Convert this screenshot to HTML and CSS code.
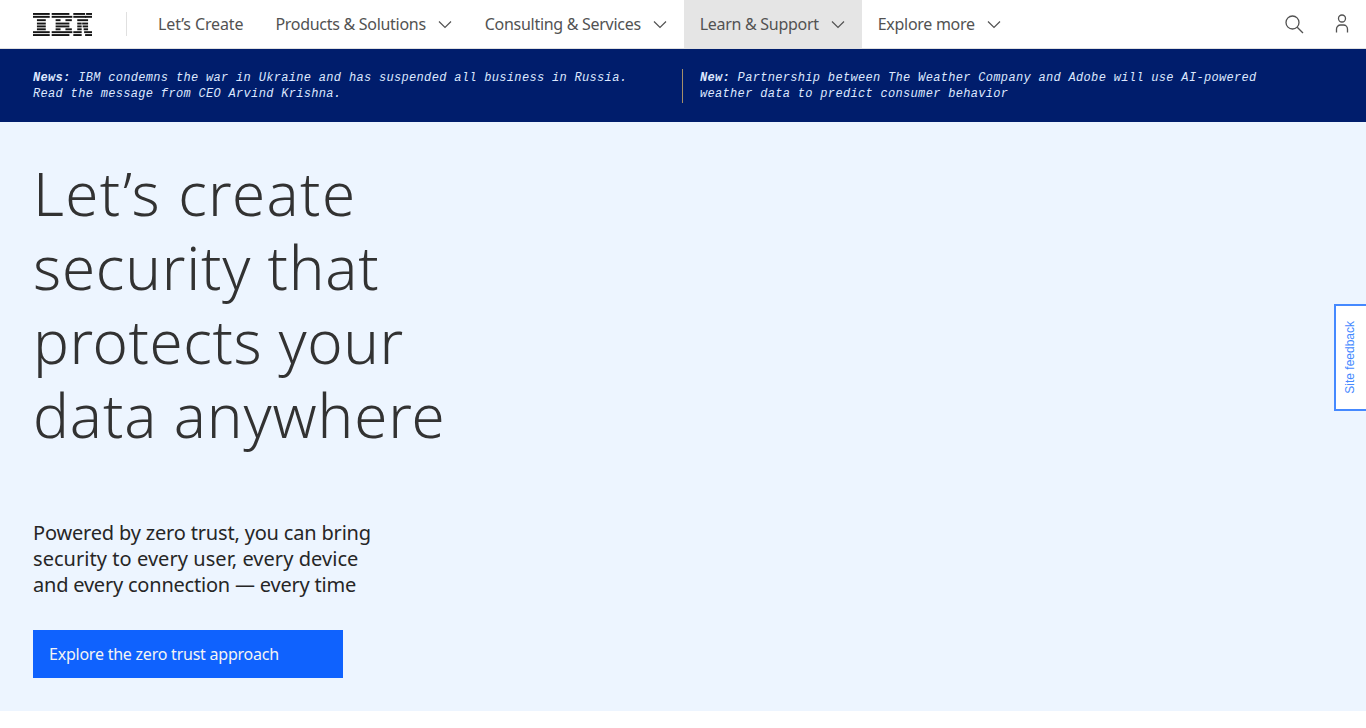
FILE: index.html
```html
<!DOCTYPE html>
<html lang="en">
<head>
<meta charset="utf-8">
<title>IBM</title>
<link rel="stylesheet" href="styles.css">
</head>
<body>
<header class="nav">
  <a class="logo" href="#" aria-label="IBM">
    <svg width="59" height="23" viewBox="0 0 60 24" preserveAspectRatio="none" fill="#161616">
      <rect x="0" y="0" width="17" height="2"/><rect x="19" y="0" width="18" height="2"/><rect x="41" y="0" width="12" height="2"/><rect x="54" y="0" width="6" height="2"/>
      <rect x="0" y="3" width="17" height="2"/><rect x="19" y="3" width="21" height="2"/><rect x="41" y="3" width="13" height="2"/><rect x="53" y="3" width="7" height="2"/>
      <rect x="4" y="6.5" width="9" height="2"/><rect x="23" y="6.5" width="5" height="2"/><rect x="33" y="6.5" width="6.5" height="2"/><rect x="45" y="6.5" width="11" height="2"/>
      <rect x="4" y="10" width="9" height="2"/><rect x="23" y="10" width="14" height="2"/><rect x="45" y="10" width="4.5" height="2"/><rect x="50" y="10" width="6" height="2"/>
      <rect x="4" y="13" width="9" height="2"/><rect x="23" y="13" width="14" height="2"/><rect x="45" y="13" width="4.5" height="2"/><rect x="50.5" y="13" width="5.5" height="2"/>
      <rect x="4" y="16" width="9" height="2"/><rect x="23" y="16" width="5" height="2"/><rect x="33" y="16" width="6.5" height="2"/><rect x="45" y="16" width="4.5" height="2"/><rect x="51.5" y="16" width="4.5" height="2"/>
      <rect x="0" y="19" width="17" height="2"/><rect x="19" y="19" width="21" height="2"/><rect x="41" y="19" width="8.5" height="2"/><rect x="52" y="19" width="8" height="2"/>
      <rect x="0" y="22" width="17" height="2"/><rect x="19" y="22" width="18" height="2"/><rect x="41" y="22" width="8.5" height="2"/><rect x="53" y="22" width="7" height="2"/>
    </svg>
  </a>
  <nav class="menu">
    <a class="item first" href="#">Let’s Create</a>
    <a class="item" href="#">Products &amp; Solutions<svg class="chev" width="16" height="16" viewBox="0 0 16 16"><path d="M2 5.5l6 6 6-6"/></svg></a>
    <a class="item" href="#">Consulting &amp; Services<svg class="chev" width="16" height="16" viewBox="0 0 16 16"><path d="M2 5.5l6 6 6-6"/></svg></a>
    <a class="item active" href="#">Learn &amp; Support<svg class="chev" width="16" height="16" viewBox="0 0 16 16"><path d="M2 5.5l6 6 6-6"/></svg></a>
    <a class="item" href="#">Explore more<svg class="chev" width="16" height="16" viewBox="0 0 16 16"><path d="M2 5.5l6 6 6-6"/></svg></a>
  </nav>
  <div class="tools">
    <svg class="tool" width="20" height="20" viewBox="0 0 20 20"><circle cx="8.5" cy="8.5" r="6.5"/><path d="M13.2 13.2L19 19"/></svg>
    <svg class="tool" width="20" height="20" viewBox="0 0 20 20"><circle cx="10" cy="4.5" r="3.5"/><path d="M4.5 18.5v-3.5a4 4 0 0 1 4-4h3a4 4 0 0 1 4 4v3.5"/></svg>
  </div>
</header>
<section class="banner">
  <p class="news"><b>News:</b> IBM condemns the war in Ukraine and has suspended all business in Russia.<br>Read the message from CEO Arvind Krishna.</p>
  <p class="news second"><b>New:</b> Partnership between The Weather Company and Adobe will use AI-powered<br>weather data to predict consumer behavior</p>
</section>
<main class="hero">
  <h1><span class="h1">Let’s create</span><span class="h2">security that</span><span class="h3">protects your</span><span class="h4">data anywhere</span></h1>
  <p class="lead"><span class="l1">Powered by zero trust, you can bring</span><span class="l2">security to every user, every device</span><span class="l3">and every connection — every time</span></p>
  <a class="cta" href="#">Explore the zero trust approach</a>
</main>
<a class="feedback" href="#"><span>Site feedback</span></a>
</body>
</html>
```
FILE: styles.css
```css
* { box-sizing: border-box; }
html, body { margin: 0; padding: 0; background: #fff; }
body { font-family: "Noto Sans", "Open Sans", sans-serif; color: #161616; height: 728px; overflow: hidden; }
a { text-decoration: none; color: inherit; }
.nav { display: flex; align-items: stretch; height: 49px; border-bottom: 1px solid #e0e0e0; padding-left: 33px; }
.logo { display: flex; align-items: center; width: 94px; position: relative; padding-top: 1px; }
.logo::after { content: ""; position: absolute; right: 0; top: 12px; height: 24px; width: 1px; background: #e0e0e0; }
.menu { display: flex; margin-left: 15px; }
.item { display: flex; align-items: center; gap: 11px; padding: 0 16px; font-size: 16px; letter-spacing: -0.29px; color: #525252; height: 48px; }
.item.first { letter-spacing: -0.12px; }
.item.active { background: #e5e5e5; }
.chev { fill: none; stroke: #525252; stroke-width: 1.2; }
.tools { margin-left: auto; display: flex; align-items: center; gap: 28px; padding-right: 14px; }
.tool { fill: none; stroke: #525252; stroke-width: 1.3; }
.banner { display: flex; align-items: center; height: 73px; background: #001d6c; color: #dde8ff; padding-left: 33px; }
.news { margin: 0; font: italic 12px/16px "Liberation Mono", monospace; letter-spacing: 0.32px; width: 649px; }
.news.second { border-left: 1px solid #a58f68; padding: 1px 0 0 17px; width: auto; height: 34px; }
.hero { background: #edf5ff; height: 589px; padding: 34px 33px 0; }
h1 { margin: 0; font-weight: 300; font-size: 60px; line-height: 74px; color: #323232; }
h1 span, .lead span { display: block; }
.h1 { letter-spacing: 1.42px; }
.h2 { letter-spacing: 0.8px; }
.h3 { letter-spacing: 0.6px; }
.h4 { letter-spacing: 0.9px; }
.lead { margin: 68px 0 0; font-size: 20px; line-height: 26px; color: #262626; }
.l1 { letter-spacing: -0.18px; }
.l2 { letter-spacing: 0.05px; }
.l3 { letter-spacing: -0.21px; }
.cta { display: flex; align-items: center; width: 310px; height: 48px; margin-top: 32px; padding-left: 16px; background: #0f62fe; color: #f4f4f4; font-size: 16px; letter-spacing: -0.23px; }
.feedback { position: absolute; right: 0; top: 304px; width: 32px; height: 107px; background: #fff; border: 2px solid #4589ff; border-right: 0; padding-right: 2px; display: flex; align-items: center; justify-content: center; }
.feedback span { writing-mode: vertical-rl; transform: rotate(180deg); font: 12px "Liberation Sans", sans-serif; color: #4589ff; }
```
